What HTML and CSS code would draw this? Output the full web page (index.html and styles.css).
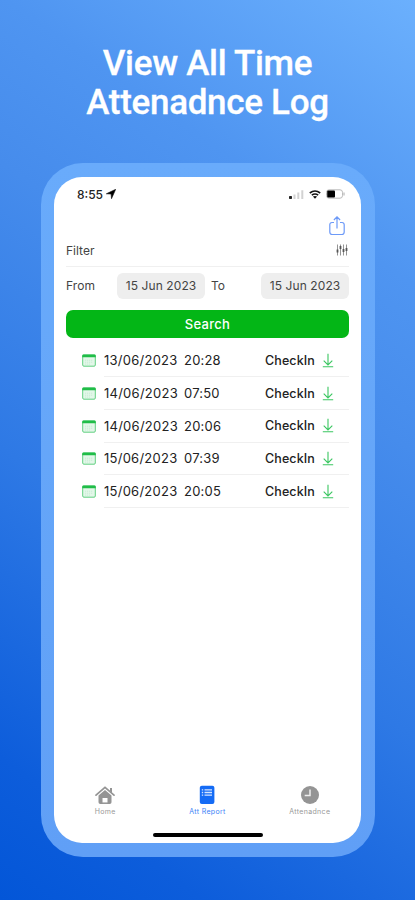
FILE: index.html
```html
<!DOCTYPE html>
<html lang="en">
<head>
<meta charset="utf-8">
<title>View All Time Attenadnce Log</title>
<link rel="stylesheet" href="styles.css">
</head>
<body>
<svg class="sprite" aria-hidden="true">
  <symbol id="calendar" viewBox="0 0 14 13">
    <rect x=".7" y="1" width="12.6" height="11.2" rx="1.2" fill="#e3f7e9" stroke="#62cf80" stroke-width="1"/>
    <path d="M.2 3.300V1.700Q.2.5 1.400.5h11.200q1.200 0 1.200 1.200v1.600z" fill="#20bd48"/>
    <path d="M3 6.2h8M3 8.2h8M3 10.1h5" stroke="#c0ecce" stroke-width=".8" stroke-dasharray="1.2 .8"/>
  </symbol>
  <symbol id="arrow" viewBox="0 0 12 15">
    <path d="M6 .8v11M1.700 7.600 6 12l4.300-4.400M.8 13.800h10.400" fill="none" stroke="#3bc661" stroke-width="1.1"/>
  </symbol>
</svg>
<main class="poster">
  <h1 class="title">View All Time<br>Attenadnce Log</h1>
  <section class="phone">
    <div class="screen">
      <header class="status">
        <span class="time">8:55</span>
        <svg class="location" viewBox="0 0 10 10"><path d="M.3 4.800 9.700.3 5.500 9.700 5.100 5z" stroke="#111" stroke-width=".6"/></svg>
        <svg class="signal" viewBox="0 0 15 9"><rect x="0" y="6" width="3" height="3" rx=".7" fill="#222"/><path d="M4.500 4.500h2V9h-2zM8.300 2.500h2V9h-2zM12.300 .3h2V9h-2z" fill="#d2d2d2"/></svg>
        <svg class="wifi" viewBox="0 0 12 9"><path d="M.8 3Q6-1.100 11.200 3M2.800 5.100q3.200-2.300 6.400 0" fill="none" stroke="#111" stroke-width="1.600"/><path d="m3.900 6.600 2.100 2.200 2.100-2.200q-2.100-1.200-4.200 0" fill="#111"/></svg>
        <svg class="battery" viewBox="0 0 19 10"><rect x=".5" y=".8" width="16" height="8.400" rx="2.500" fill="#fff" stroke="#bbb"/><rect x="1.200" y="1.600" width="7.800" height="6.800" rx="1" fill="#000"/><path d="M18 3.500v3" stroke="#aaa"/></svg>
      </header>
      <div class="toolbar">
        <svg class="share" viewBox="0 0 16 20"><path d="M5 6.500H3Q.8 6.500.8 8.700V16q0 2.500 2.500 2.500h9.400q2.500 0 2.500-2.500V8.700q0-2.200-2.200-2.200h-2M8 12.500V1M4.900 4 8 .9 11.100 4" fill="none" stroke="#6d9af8" stroke-width="1.200"/></svg>
      </div>
      <div class="filter">
        <span>Filter</span>
        <svg class="sliders" viewBox="0 0 12 12"><path d="M1.500.5v11M4.500.5v11M7.500.5v11M10.500.5v11" stroke="#888" stroke-width=".9"/><path d="M1.500 5.500v3M4.500 2v3M7.500 5v3M10.500 4v3" stroke="#555" stroke-width="1.800"/></svg>
      </div>
      <div class="range">
        <span class="from">From</span><span class="date">15 Jun 2023</span><span class="to">To</span><span class="date">15 Jun 2023</span>
      </div>
      <button class="search">Search</button>
      <ul class="log">
        <li><svg class="cal"><use href="#calendar"/></svg><div class="entry"><span class="day">13/06/2023</span><span class="hour">20:28</span><span class="kind">CheckIn</span><svg class="arr"><use href="#arrow"/></svg></div></li>
        <li><svg class="cal"><use href="#calendar"/></svg><div class="entry"><span class="day">14/06/2023</span><span class="hour">07:50</span><span class="kind">CheckIn</span><svg class="arr"><use href="#arrow"/></svg></div></li>
        <li><svg class="cal"><use href="#calendar"/></svg><div class="entry"><span class="day">14/06/2023</span><span class="hour">20:06</span><span class="kind">CheckIn</span><svg class="arr"><use href="#arrow"/></svg></div></li>
        <li><svg class="cal"><use href="#calendar"/></svg><div class="entry"><span class="day">15/06/2023</span><span class="hour">07:39</span><span class="kind">CheckIn</span><svg class="arr"><use href="#arrow"/></svg></div></li>
        <li><svg class="cal"><use href="#calendar"/></svg><div class="entry"><span class="day">15/06/2023</span><span class="hour">20:05</span><span class="kind">CheckIn</span><svg class="arr"><use href="#arrow"/></svg></div></li>
      </ul>
      <nav class="tabs">
        <a class="tab"><svg viewBox="0 0 20 20"><path d="M1 10.200 10 2.400l9 7.800" fill="none" stroke="#949494" stroke-width="1.700" stroke-linecap="round"/><path d="M15 3h2v5l-2-1.800zM3.500 10.500 10 5l6.500 5.500v6.700q0 1.800-1.800 1.800H12.500v-6h-5v6H5.300q-1.800 0-1.800-1.800z" fill="#949494"/><path d="M6 18.200h8" stroke="#949494" stroke-width="1.500"/></svg><span>Home</span></a>
        <a class="tab active"><svg viewBox="0 0 20 20"><rect x="2.800" y=".8" width="14.600" height="18.200" rx="2" fill="#146bf5"/><path d="M7.500 4.900h7.500M7.500 7.500h7.500M7.500 10.100h7.500M4.800 4.900h1.400M4.800 7.500h1.400M4.800 10.100h1.400" stroke="#d5e5ff" stroke-width="1.300"/></svg><span>Att Report</span></a>
        <a class="tab"><svg viewBox="0 0 20 20"><circle cx="10" cy="10" r="9" fill="#949494"/><path d="M10 4.500V10.600H4.700" fill="none" stroke="#eee" stroke-width="1.500"/></svg><span>Attenadnce</span></a>
      </nav>
      <div class="homebar"></div>
    </div>
  </section>
</main>
</body>
</html>
```
FILE: styles.css
```css
* { box-sizing: border-box; }
body { margin: 0; font-family: Inter, "Liberation Sans", sans-serif; }
.sprite { position: absolute; width: 0; height: 0; }
.poster {
  width: 415px;
  height: 900px;
  overflow: hidden;
  display: flex;
  flex-direction: column;
  align-items: center;
  background: linear-gradient(35deg, #0356d8 0%, #0d5ddb 12%, #2e79e5 38%, #468cec 62%, #4f95f1 76%, #6bb0fd 100%);
}
.title {
  margin: 45px 0 0;
  height: 118px;
  font: 500 35px/38.5px Roboto, sans-serif;
  letter-spacing: -.3px;
  -webkit-text-stroke: .3px #fff;
  color: #fff;
  text-align: center;
  white-space: nowrap;
}
.phone {
  width: 334px;
  height: 694px;
  padding: 14px 13.5px;
  border-radius: 42px;
  background: linear-gradient(#69abfb, #609ff6);
}
.screen {
  width: 307px;
  height: 665.5px;
  padding: 0 12px;
  border-radius: 28px;
  background: #fff;
  display: flex;
  flex-direction: column;
  color: #444;
  font-size: 12px;
}
.status { display: flex; align-items: center; height: 34px; padding: 0 4px 0 11px; }
.time { font-size: 12px; font-weight: 500; color: #222; }
.location { width: 10px; height: 10px; margin-left: 3px; }
.signal { width: 15px; height: 9px; margin-left: auto; }
.wifi { width: 12px; height: 9px; margin-left: 5px; }
.battery { width: 19px; height: 10px; margin-left: 5px; }
.toolbar { height: 29px; display: flex; justify-content: flex-end; padding: 5px 4px 0 0; }
.share { width: 16px; height: 20px; }
.filter {
  height: 27px;
  display: flex;
  justify-content: space-between;
  align-items: center;
  padding: 0 1px 6px 0;
  border-bottom: 1px solid #f0f0f0;
}
.sliders { width: 12px; height: 12px; }
.range { display: flex; align-items: center; height: 37px; }
.from { width: 51px; letter-spacing: .1px; }
.date { width: 88px; height: 26px; border-radius: 6px; background: #eee; line-height: 26px; text-align: center; white-space: nowrap; letter-spacing: .1px; }
.to { width: 56px; padding-left: 6px; }
.search {
  height: 28px;
  flex: none;
  margin: 5.500px 0 7px;
  padding: 0;
  border: 0;
  border-radius: 7px;
  background: #03b616;
  color: #fff;
  font: 500 13px/28px Inter, sans-serif;
  letter-spacing: .3px;
}
.log { list-style: none; margin: 0; padding: 0 0 0 16px; color: #222; font-size: 13px; }
.log li { display: flex; align-items: center; height: 32.7px; }
.cal { width: 14px; height: 13px; margin-right: 8px; }
.entry { flex: 1; display: flex; align-items: center; height: 100%; border-bottom: 1px solid #f0f0f0; white-space: nowrap; }
.day { width: 80px; letter-spacing: .25px; }
.hour { width: 81px; letter-spacing: .2px; }
.kind { width: 57px; font-weight: 500; font-size: 12.5px; letter-spacing: .1px; }
.arr { width: 12px; height: 15px; }
.tabs { display: grid; grid-template-columns: repeat(3, 102.3px); margin: auto -12px 0; height: 43px; }
.tab { display: flex; flex-direction: column; align-items: center; color: #999; font-size: 7px; line-height: 10px; letter-spacing: .35px; }
.tab svg { width: 20px; height: 20px; margin: 1px 0 2px; }
.active { color: #3b82f7; }
.homebar { width: 110px; height: 4px; flex: none; margin: 6px auto 6px; border-radius: 2px; background: #000; }
```
